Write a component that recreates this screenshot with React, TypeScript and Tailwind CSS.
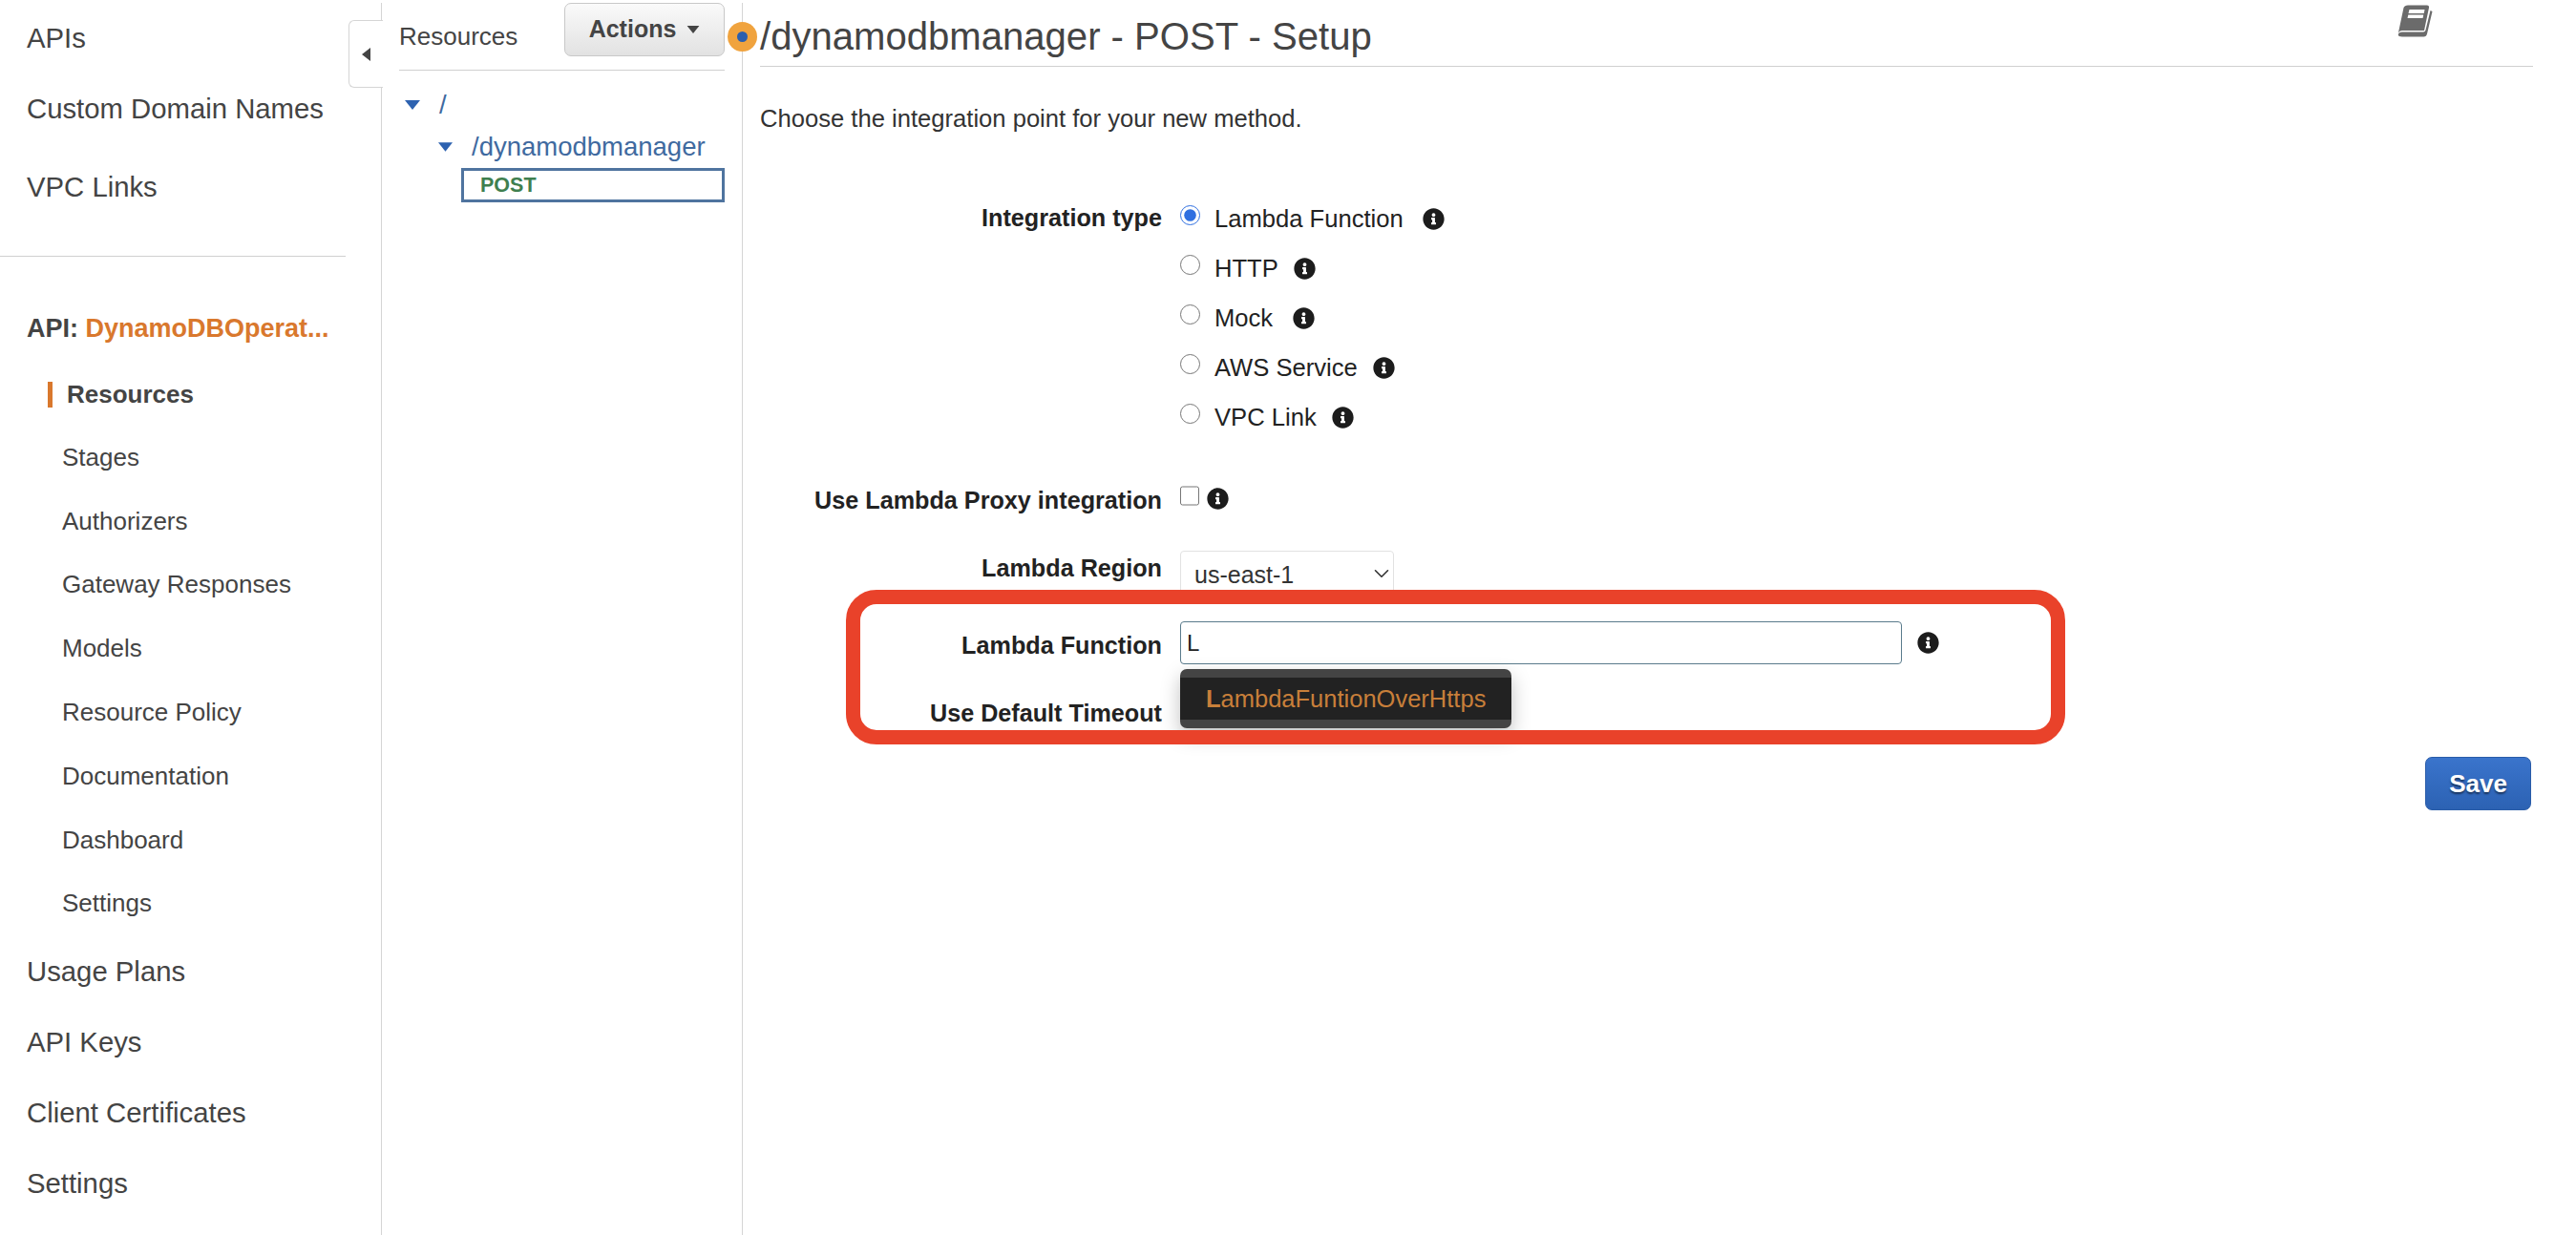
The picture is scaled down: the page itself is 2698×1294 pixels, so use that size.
import { FaInfoCircle } from 'react-icons/fa';
import { ChevronDown } from 'lucide-react';

const SUB_ITEMS = ['Stages', 'Authorizers', 'Gateway Responses', 'Models', 'Resource Policy', 'Documentation', 'Dashboard', 'Settings'];
const BOTTOM_ITEMS = ['Usage Plans', 'API Keys', 'Client Certificates', 'Settings'];
const INTEGRATIONS = [
  { name: 'Lambda Function', infoGap: 'ml-[20px]' },
  { name: 'HTTP', infoGap: 'ml-[16px]' },
  { name: 'Mock', infoGap: 'ml-[21px]' },
  { name: 'AWS Service', infoGap: 'ml-[16px]' },
  { name: 'VPC Link', infoGap: 'ml-[16px]' },
];

function Caret({ className }: { className: string }) {
  return (
    <svg className={className} viewBox="0 0 16 10" fill="currentColor">
      <path d="M0 0h16L8 10z" />
    </svg>
  );
}

function Info({ className = '' }: { className?: string }) {
  return <FaInfoCircle className={`w-[23px] h-[23px] text-[#1c1c1c] shrink-0 ${className}`} />;
}

function BookIcon() {
  return (
    <svg className="w-[37px] h-[34px] text-[#6b6b6b]" viewBox="0 0 37 34" fill="currentColor">
      <path d="M11 .5H31Q33.500 .5 33 3L28 27H5Q2 27 .8 30L6.500 3Q7.500 .5 11 .5z" />
      <path d="M34.500 6L36.500 7L31 30.500Q30.300 33.500 27.500 33.500H5Q.5 33.500 .8 31Q1.500 28.500 5 28.500H27Q29 28.500 29.500 26.500z" />
      <path d="M12.500 5H28.500L27.700 9H11.500z" fill="#fff" />
      <path d="M11.300 10.500H27.300L26.500 14H10.500z" fill="#fff" />
    </svg>
  );
}

function Sidebar() {
  return (
    <aside className="relative w-[400px] shrink-0 mt-[3px] border-r border-[#d5d5d5] text-[#444]">
      <div className="pr-[37px]">
        <div className="h-[74px] flex items-center pl-[28px] text-[29.300px]">APIs</div>
        <div className="h-[74px] flex items-center pl-[28px] text-[29.300px]">Custom Domain Names</div>
        <div className="h-[74px] mt-[8px] flex items-center pl-[28px] text-[29.300px]">VPC Links</div>
        <div className="border-b border-[#d0d0d0] mt-[35px]" />
        <div className="h-[40px] mt-[55px] flex items-center pl-[28px] text-[27px] font-bold whitespace-nowrap">
          API:&nbsp;<span className="text-[#d9782d]">DynamoDBOperat...</span>
        </div>
        <div className="h-[30px] mt-[34px] ml-[50px] flex items-center">
          <span className="w-[5px] h-[27px] bg-[#d9782d]" />
          <span className="ml-[15px] text-[26px] font-bold">Resources</span>
        </div>
        <div className="mt-[18px]">
          {SUB_ITEMS.map((item, i) => (
            <div key={i} className="h-[66.800px] flex items-center pl-[65px] text-[26px]">
              {item}
            </div>
          ))}
        </div>
        <div className="mt-[1px]">
          {BOTTOM_ITEMS.map((item, i) => (
            <div key={i} className="h-[74px] flex items-center pl-[28px] text-[29.300px]">
              {item}
            </div>
          ))}
        </div>
      </div>
      {/* collapse tab sits over the divider */}
      <div className="absolute left-[365px] top-[18px] w-[36px] h-[71px] bg-white border border-r-0 border-[#d5d5d5] rounded-l-[6px] flex items-center pl-[13px]">
        <svg className="w-[9px] h-[14px] text-[#444]" viewBox="0 0 9 14" fill="currentColor">
          <path d="M9 0v14L0 7z" />
        </svg>
      </div>
    </aside>
  );
}

function ResourceTree() {
  return (
    <section className="w-[378px] shrink-0 mt-[3px] border-r border-[#d5d5d5] pl-[18px] pr-[18px]">
      <div className="h-[71px] border-b border-[#d0d0d0] flex justify-between">
        <span className="mt-[18px] h-[34px] text-[26px] leading-[34px] text-[#444]">Resources</span>
        <button className="w-[168px] h-[56px] rounded-[7px] border border-[#c8c8c8] bg-gradient-to-b from-[#fafafa] to-[#e2e2e2] text-[#444] text-[25px] font-bold flex items-center justify-center gap-[11px] pb-[1px]">
          Actions
          <Caret className="w-[14px] h-[8px]" />
        </button>
      </div>
      <div className="pt-[14px] text-[27.500px] text-[#3f6aa0]">
        <div className="h-[44px] pl-[6px] flex items-center gap-[20px]">
          <Caret className="w-[16px] h-[10px] text-[#2d62b0]" />
          <span>/</span>
        </div>
        <div className="h-[44px] pl-[41px] flex items-center gap-[20px]">
          <Caret className="w-[15px] h-[10px] text-[#2d62b0]" />
          <span>/dynamodbmanager</span>
        </div>
        <div className="ml-[65px] h-[36px] border-[3px] border-[#4f749f] pl-[17px] flex items-center text-[21.500px] font-bold text-[#3f7f4f]">
          POST
        </div>
      </div>
    </section>
  );
}

function FormLabel({ children, height }: { children: string; height: string }) {
  return (
    <label className={`w-[421px] shrink-0 flex items-center justify-end text-[25.200px] font-bold text-[#222] whitespace-nowrap ${height}`}>
      {children}
    </label>
  );
}

function Main() {
  return (
    <main className="relative flex-1 min-w-0 pl-[18px]">
      <header className="h-[70px] mr-[45px] border-b border-[#d0d0d0] flex justify-between">
        <h1 className="mt-[15px] h-[46px] leading-[46px] text-[40.100px] text-[#444]">/dynamodbmanager - POST - Setup</h1>
        <div className="mt-[5px] mr-[105px]">
          <BookIcon />
        </div>
      </header>
      <p className="mt-[39px] h-[30px] leading-[30px] text-[25.600px] text-[#333]">Choose the integration point for your new method.</p>

      <div className="mt-[64px] flex gap-[19px]">
        <FormLabel height="h-[52px]">Integration type</FormLabel>
        <div>
          {INTEGRATIONS.map(({ name, infoGap }, i) => (
            <div key={name} className="h-[52px] flex items-center text-[25.600px] text-[#222]">
              <input type="radio" name="integration" defaultChecked={i === 0} className="w-[21px] h-[21px] m-0 mb-[8px] accent-[#2f6fe0]" />
              <span className="ml-[15px]">{name}</span>
              <Info className={infoGap} />
            </div>
          ))}
        </div>
      </div>

      <div className="mt-[42px] flex gap-[19px]">
        <FormLabel height="h-[40px]">Use Lambda Proxy integration</FormLabel>
        <div className="h-[40px] flex items-center">
          <input type="checkbox" className="w-[20px] h-[21px] m-0 mb-[12px]" />
          <Info className="ml-[8px] mb-[6px]" />
        </div>
      </div>

      <div className="mt-[32px] flex gap-[19px]">
        <FormLabel height="h-[38px]">Lambda Region</FormLabel>
        <div className="relative w-[224px] h-[51px]">
          <select defaultValue="us-east-1" className="w-full h-full appearance-none bg-white border border-[#e2e2e2] rounded-[4px] pl-[14px] pt-0 text-[25px] text-[#333]">
            <option>us-east-1</option>
          </select>
          <ChevronDown className="absolute right-0 top-[11px] w-[26px] h-[26px] text-[#333] pointer-events-none" strokeWidth={1.5} />
        </div>
      </div>

      <div className="mt-[23px] flex gap-[19px]">
        <FormLabel height="h-[52px]">Lambda Function</FormLabel>
        <div className="relative">
          <div className="flex items-center">
            <input
              readOnly
              value="L"
              className="w-[756px] h-[45px] border border-[#5a7b8c] rounded-[4px] pl-[6px] text-[24px] text-[#222] bg-white"
            />
            <Info className="ml-[16px]" />
          </div>
          {/* autocomplete popup */}
          <div className="absolute left-0 top-[50px] w-[347px] h-[62px] rounded-[7px] bg-[#444] py-[9px] shadow-[0_8px_20px_rgba(0,0,0,0.25)]">
            <div className="h-[44px] bg-[#222] flex items-center pl-[27px] text-[25.500px] text-[#c87f3a] whitespace-nowrap">
              <b>L</b>ambdaFuntionOverHttps
            </div>
          </div>
        </div>
      </div>

      <div className="mt-[25px] flex gap-[19px]">
        <FormLabel height="h-[40px]">Use Default Timeout</FormLabel>
      </div>

      <div className="mt-[25px] mr-[47px] flex justify-end">
        <button className="w-[111px] h-[56px] rounded-[7px] bg-gradient-to-b from-[#3a74cc] to-[#2c62b3] border border-[#2a5ca8] text-white text-[26px] font-bold [text-shadow:0_2px_2px_rgba(0,0,0,0.5)]">
          Save
        </button>
      </div>

      {/* status dot on the divider */}
      <div className="absolute -left-[16px] top-[23px] w-[31px] h-[31px] rounded-full bg-[#f0a33e] flex items-center justify-center">
        <span className="w-[11px] h-[11px] rounded-full bg-[#2b5fae]" />
      </div>
      {/* red annotation drawn over the screenshot */}
      <div className="absolute left-[108px] top-[618px] w-[1277px] h-[162px] border-[15px] border-[#e9422a] rounded-[32px] pointer-events-none" />
    </main>
  );
}

export default function App() {
  return (
    <div className="flex h-[1294px] overflow-hidden bg-white font-['Liberation_Sans',Arial,sans-serif]">
      <Sidebar />
      <ResourceTree />
      <Main />
    </div>
  );
}
